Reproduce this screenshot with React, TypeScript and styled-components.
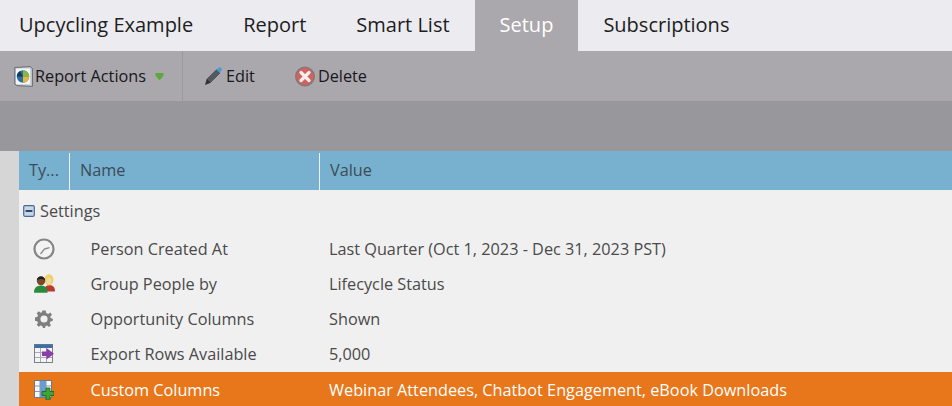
import React from "react";
import styled, { createGlobalStyle } from "styled-components";

const Global = createGlobalStyle`
  html, body {
    margin: 0;
    padding: 0;
    background: #f0f0f0;
  }
  body {
    font-family: "Open Sans", "Liberation Sans", sans-serif;
    overflow: hidden;
  }
`;

const Page = styled.div`
  width: 952px;
  height: 406px;
  display: flex;
  flex-direction: column;
  overflow: hidden;
`;

const Tabs = styled.div`
  height: 51px;
  display: flex;
  padding-left: 19px;
  background: #ebebf0;
  flex: none;
`;

const Tab = styled.div<{ $active?: boolean }>`
  padding: 0 25px 2px;
  display: flex;
  align-items: center;
  font-size: 20px;
  color: ${(p) => (p.$active ? "#ffffff" : "#1d1d22")};
  background: ${(p) => (p.$active ? "#aaa8ac" : "transparent")};
  &:first-child {
    padding-left: 0;
  }
`;

const Toolbar = styled.div`
  height: 50px;
  flex: none;
  display: flex;
  align-items: center;
  background: #aaa8ac;
  color: #17171c;
  font-size: 16.25px;
`;

const ActionsGroup = styled.div`
  width: 183px;
  height: 100%;
  display: flex;
  align-items: center;
  padding-left: 14px;
  box-sizing: border-box;
  border-right: 1px solid #9b999d;
  flex: none;
`;

const ToolButton = styled.div<{ $left: number; $gap?: number }>`
  display: flex;
  align-items: center;
  gap: ${(p) => p.$gap ?? 4}px;
  margin-left: ${(p) => p.$left}px;
`;

const Caret = styled.svg`
  margin-left: 9px;
  margin-top: 1px;
`;

const Band = styled.div`
  height: 50px;
  flex: none;
  background: #98979b;
`;

const Body = styled.div`
  flex: 1;
  display: flex;
  min-height: 0;
`;

const Gutter = styled.div`
  width: 19px;
  flex: none;
  background: #d6d6d6;
`;

const Main = styled.div`
  flex: 1;
  background: #f0f0f0;
  display: flex;
  flex-direction: column;
`;

const HeaderRow = styled.div`
  height: 39px;
  flex: none;
  display: grid;
  grid-template-columns: 51px 250px 1fr;
  background: #77b1cf;
  color: #3c4c56;
  font-size: 16.25px;
`;

const HeaderCell = styled.div`
  display: flex;
  align-items: center;
  padding: 0 0 2px 10px;
  box-sizing: border-box;
  position: relative;
  &:not(:last-child)::after {
    content: "";
    position: absolute;
    right: 0;
    top: 2px;
    bottom: 0;
    width: 1px;
    background: #e8f2f7;
  }
`;

const GroupRow = styled.div`
  height: 41px;
  flex: none;
  display: flex;
  align-items: center;
  gap: 5px;
  padding-left: 4px;
  color: #4a4a4a;
  font-size: 16.25px;
`;

const Row = styled.div<{ $selected?: boolean }>`
  height: 35px;
  flex: none;
  display: grid;
  grid-template-columns: 51px 259px 1fr;
  align-items: center;
  font-size: 16.25px;
  color: ${(p) => (p.$selected ? "#ffffff" : "#4a4a4a")};
  background: ${(p) => (p.$selected ? "#e8761a" : "transparent")};
  margin-top: ${(p) => (p.$selected ? "1px" : "0")};
`;

const RowIcon = styled.div`
  display: flex;
  justify-content: center;
  padding-right: 1px;
`;

const RowName = styled.div`
  padding-left: 20.5px;
`;

const RowValue = styled.div`
  padding-left: 0;
`;

const ReportIcon = () => (
  <svg width="19" height="21" viewBox="0 0 19 21">
    <path d="M0.8 1.5 L16 0.6 L18.4 2.5 V20.4 L3 19.6 L0.8 18 Z" fill="#c9cfd6" stroke="#666b73" strokeWidth="1" />
    <rect x="2" y="2.6" width="14" height="15.6" fill="#f3f5f8" />
    <circle cx="9" cy="10.5" r="6.2" fill="#2a6fa8" />
    <path d="M9 4.3 A6.2 6.2 0 0 1 15.2 10.5 L9 10.5 Z" fill="#8cb63c" />
    <path d="M9 10.5 L15.2 10.5 A6.2 6.2 0 0 1 9 16.7 Z" fill="#e2b93b" />
    <path d="M2.8 10.5 A6.2 6.2 0 0 1 6 5.2 L9 10.5 Z" fill="#16385c" />
  </svg>
);

const PencilIcon = () => (
  <svg width="18" height="19" viewBox="0 0 18 19">
    <path d="M1.5 17.5 L3 12 L12.5 2.8 L16 6 L6.5 15.5 Z" fill="#55585e" stroke="#3a3c40" strokeWidth="0.6" />
    <path d="M3 12 L6.5 15.5 L1.5 17.5 Z" fill="#2f3033" />
    <path d="M12.5 2.8 L14.4 1 A1.8 1.8 0 0 1 17 3.8 L16 6 Z" fill="#3f9ddb" />
  </svg>
);

const DeleteIcon = () => (
  <svg width="20" height="21" viewBox="0 0 20 21">
    <circle cx="10" cy="10.5" r="9.2" fill="#d65f5f" stroke="#7f7b7a" strokeWidth="1.6" />
    <path d="M6 6.5 L14 14.5 M14 6.5 L6 14.5" stroke="#f7eeee" strokeWidth="3.2" strokeLinecap="round" />
  </svg>
);

const CollapseIcon = () => (
  <svg width="12" height="12" viewBox="0 0 12 12">
    <rect x="0.7" y="0.7" width="10.6" height="10.6" rx="1.2" fill="#c9d6e6" stroke="#4a6a94" strokeWidth="1.2" />
    <rect x="2.6" y="5" width="6.8" height="2" fill="#2c4a70" />
  </svg>
);

const ClockIcon = () => (
  <svg width="22" height="22" viewBox="0 0 22 22">
    <circle cx="11" cy="11" r="9.5" fill="#f3f3f3" stroke="#858585" strokeWidth="2.2" />
    <path d="M11.5 11 L16.5 9.6 M11.5 11 L7.5 16" stroke="#8c8c8c" strokeWidth="1.3" fill="none" />
  </svg>
);

const PeopleIcon = () => (
  <svg width="21" height="19" viewBox="0 0 21 19">
    <path d="M10 17.5 Q10 11 15.5 11 Q21 11 21 17.5 Z" fill="#b83a30" />
    <ellipse cx="15" cy="5.8" rx="4.4" ry="5.6" fill="#efd25e" />
    <ellipse cx="15" cy="7" rx="2.5" ry="3.2" fill="#f4d9a8" />
    <path d="M0 18.8 Q0 11.5 7 11.5 Q13.5 11.5 13.5 18.8 Z" fill="#2a8a3a" />
    <circle cx="7" cy="7" r="4.2" fill="#7a4a2c" />
    <path d="M2.8 6.5 A4.2 4.2 0 0 1 11.2 6.5 Q7 3.6 2.8 6.5 Z" fill="#22201e" />
  </svg>
);

const GearIcon = () => (
  <svg width="18" height="18" viewBox="0 0 18 18">
    <path
      d="M7.3 0.5 H10.7 L11.2 3 L13.2 3.9 L15.3 2.5 L15.5 2.7 L17 5 L15.2 6.6 L15.6 8 L18 9 L17.5 11 L15.4 11.6 L14.7 13.2 L16 15.3 L14 17 L12 15.5 L10.6 16 L10 18 H8 L7.2 16 L5.6 15.4 L3.7 16.8 L1.7 14.8 L3 13 L2.4 11.4 L0 10.7 V7.4 L2.4 6.8 L3 5.3 L1.7 3.3 L3.8 1.3 L5.7 2.7 L7 2.2 Z"
      fill="#7e7e7e"
    />
    <circle cx="9" cy="9" r="3.6" fill="#f0f0f0" />
  </svg>
);

const ExportIcon = () => (
  <svg width="20" height="19" viewBox="0 0 20 19">
    <rect x="0.5" y="0.5" width="18" height="18" fill="#f4f4f4" stroke="#7a7f88" />
    <rect x="0.5" y="0.5" width="18" height="3.5" fill="#3d6fa5" />
    <path d="M6.5 4 V18 M12.5 4 V18 M1 8.5 H18 M1 13.5 H18" stroke="#a6aab2" />
    <path d="M8 7.5 H12.5 V4 L20 9.8 L12.5 15.5 V12 H8 Z" fill="#8a3fa8" />
  </svg>
);

const ColumnsIcon = () => (
  <svg width="20" height="20" viewBox="0 0 20 20">
    <rect x="0.5" y="0.5" width="17" height="17" fill="#f6f8fb" stroke="#6e7984" />
    <rect x="6" y="1" width="6" height="16" fill="#5d9fdf" />
    <path d="M6 1 V17 M12 1 V17 M1 6 H17 M1 11.5 H17" stroke="#8a98a6" />
    <path d="M12 8 H16 V11.5 H20 V15.5 H16 V20 H12 V15.5 H8 V11.5 H12 Z" fill="#3fa535" stroke="#1c5f19" strokeWidth="0.8" />
  </svg>
);

const rows = [
  { icon: <ClockIcon />, name: "Person Created At", value: "Last Quarter (Oct 1, 2023 - Dec 31, 2023 PST)" },
  { icon: <PeopleIcon />, name: "Group People by", value: "Lifecycle Status" },
  { icon: <GearIcon />, name: "Opportunity Columns", value: "Shown" },
  { icon: <ExportIcon />, name: "Export Rows Available", value: "5,000" },
  {
    icon: <ColumnsIcon />,
    name: "Custom Columns",
    value: "Webinar Attendees, Chatbot Engagement, eBook Downloads",
    selected: true,
  },
];

export default function App() {
  return (
    <Page>
      <Global />
      <Tabs>
        <Tab>Upcycling Example</Tab>
        <Tab>Report</Tab>
        <Tab>Smart List</Tab>
        <Tab $active>Setup</Tab>
        <Tab>Subscriptions</Tab>
      </Tabs>
      <Toolbar>
        <ActionsGroup>
          <ReportIcon />
          <ToolButton $left={2}>Report Actions</ToolButton>
          <Caret width="9" height="9" viewBox="0 0 9 9">
            <path d="M0.5 1 H8.5 V3.5 L4.5 8.5 L0.5 3.5 Z" fill="#5da83c" />
          </Caret>
        </ActionsGroup>
        <ToolButton $left={21}>
          <PencilIcon />
          Edit
        </ToolButton>
        <ToolButton $left={40} $gap={3}>
          <DeleteIcon />
          Delete
        </ToolButton>
      </Toolbar>
      <Band />
      <Body>
        <Gutter />
        <Main>
          <HeaderRow>
            <HeaderCell>Ty...</HeaderCell>
            <HeaderCell>Name</HeaderCell>
            <HeaderCell>Value</HeaderCell>
          </HeaderRow>
          <GroupRow>
            <CollapseIcon />
            Settings
          </GroupRow>
          {rows.map((row) => (
            <Row key={row.name} $selected={row.selected}>
              <RowIcon>{row.icon}</RowIcon>
              <RowName>{row.name}</RowName>
              <RowValue>{row.value}</RowValue>
            </Row>
          ))}
        </Main>
      </Body>
    </Page>
  );
}
